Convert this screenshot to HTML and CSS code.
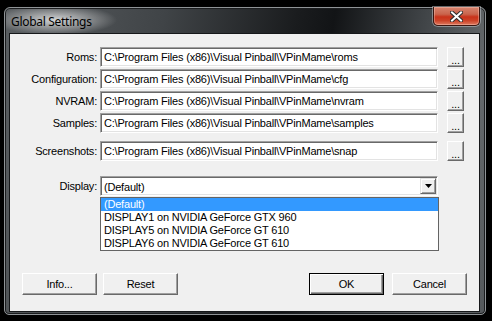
FILE: index.html
```html
<!DOCTYPE html>
<html lang="en">
<head>
  <meta charset="UTF-8" />
  <title>Global Settings</title>
  <link rel="stylesheet" href="styles.css">
</head>
<body>
  <div class="window">
    <div class="titlebar">
      <span class="title">Global Settings</span>
      <div class="close">
        <svg width="13" height="11" viewBox="0 0 13 11">
          <path d="M2 1.5 L11 9.5 M11 1.5 L2 9.5" stroke="#2d2d2d" stroke-width="4" stroke-linecap="square" />
          <path d="M2 1.5 L11 9.5 M11 1.5 L2 9.5" stroke="#fff" stroke-width="2" stroke-linecap="square" />
        </svg>
      </div>
    </div>

    <div class="client">
      <div class="paths">
        <div class="row">
          <label>Roms:</label>
          <div class="edit">C:\Program Files (x86)\Visual Pinball\VPinMame\roms</div>
          <div class="btn browse">...</div>
        </div>
        <div class="row">
          <label>Configuration:</label>
          <div class="edit">C:\Program Files (x86)\Visual Pinball\VPinMame\cfg</div>
          <div class="btn browse">...</div>
        </div>
        <div class="row">
          <label>NVRAM:</label>
          <div class="edit">C:\Program Files (x86)\Visual Pinball\VPinMame\nvram</div>
          <div class="btn browse">...</div>
        </div>
        <div class="row">
          <label>Samples:</label>
          <div class="edit">C:\Program Files (x86)\Visual Pinball\VPinMame\samples</div>
          <div class="btn browse">...</div>
        </div>
        <div class="row spaced">
          <label>Screenshots:</label>
          <div class="edit">C:\Program Files (x86)\Visual Pinball\VPinMame\snap</div>
          <div class="btn browse">...</div>
        </div>
      </div>

      <div class="row display">
        <label>Display:</label>
        <div class="combo">
          <span class="combo-text">(Default)</span>
          <span class="drop">
            <svg width="7" height="4" viewBox="0 0 7 4"><path d="M0 0 H7 L3.5 4 Z" fill="#000" /></svg>
          </span>
          <ul class="list">
            <li class="selected">(Default)</li>
            <li>DISPLAY1 on NVIDIA GeForce GTX 960</li>
            <li>DISPLAY5 on NVIDIA GeForce GT 610</li>
            <li>DISPLAY6 on NVIDIA GeForce GT 610</li>
          </ul>
        </div>
      </div>

      <div class="actions">
        <div class="group">
          <div class="btn push">Info...</div>
          <div class="btn push">Reset</div>
        </div>
        <div class="group wide">
          <div class="btn push default">OK</div>
          <div class="btn push">Cancel</div>
        </div>
      </div>
    </div>
  </div>
</body>
</html>
```

FILE: styles.css
```css
* {
  box-sizing: border-box;
}

body {
  margin: 0;
  padding: 7px 0 0 4px;
  width: 492px;
  height: 321px;
  overflow: hidden;
  background: #000;
  font-family: 'Liberation Sans', Arial, sans-serif;
  font-size: 11px;
  letter-spacing: -0.2px;
  color: #000;
}

.window {
  width: 482px;
  height: 308px;
  border: 1px solid #8f9396;
  border-radius: 6px 6px 5px 5px;
  padding: 0 5px 2px 4px;
  display: flex;
  flex-direction: column;
  background:
    radial-gradient(ellipse 62px 15px at 50px 12px, rgba(255, 255, 255, 0.75), rgba(255, 255, 255, 0)),
    linear-gradient(100deg, #5a5e61 0%, #404447 30%, #1a1c1e 55%, #121416 62%, #3e4245 78%, #64686b 92%, #54585b 100%);
  box-shadow: inset 0 0 0 1px #1b1d1f;
}

.titlebar {
  height: 25px;
  display: flex;
  justify-content: space-between;
  align-items: flex-start;
}

.title {
  font-family: 'Noto Sans', sans-serif;
  font-size: 12px;
  letter-spacing: -0.3px;
  padding: 5px 0 0 2px;
  color: #000;
}

.close {
  width: 47px;
  height: 19px;
  margin-top: -1px;
  border: 1px solid #3b1610;
  border-top: none;
  border-radius: 0 0 5px 5px;
  display: flex;
  align-items: center;
  justify-content: center;
  background: linear-gradient(#d7846f 0%, #c9644c 40%, #c8321a 55%, #cc4227 75%, #de7a5f 100%);
  box-shadow: inset 0 0 0 1px rgba(255, 220, 210, 0.35), 0 0 0 1px rgba(200, 205, 210, 0.5);
}

.client {
  flex: 1;
  background: #f0f0f0;
  border: 1px solid #16181a;
  display: flex;
  flex-direction: column;
}

.paths {
  padding-top: 13px;
}

.row {
  display: flex;
  align-items: center;
  height: 20px;
}

.row + .row {
  margin-top: 2px;
}

.row.spaced {
  margin-top: 8px;
}

label {
  width: 88px;
  text-align: right;
  padding-right: 1px;
}

.edit {
  width: 338px;
  height: 20px;
  margin-left: 2px;
  padding: 3px 0 0 3px;
  background: #fff;
  border-top: 1px solid #a0a0a0;
  border-left: 1px solid #a0a0a0;
  border-right: 1px solid #fff;
  border-bottom: 1px solid #fff;
  box-shadow: inset 1px 1px 0 #696969, inset -1px -1px 0 #e3e3e3;
  white-space: nowrap;
  overflow: hidden;
}

.btn {
  background: #f0f0f0;
  border-top: 1px solid #fff;
  border-left: 1px solid #fff;
  border-right: 1px solid #696969;
  border-bottom: 1px solid #696969;
  box-shadow: inset -1px -1px 0 #a0a0a0;
  text-align: center;
}

.browse {
  width: 17px;
  height: 20px;
  margin-left: 9px;
  line-height: 24px;
}

.display {
  margin-top: 15px;
}

.combo {
  position: relative;
  width: 338px;
  height: 20px;
  margin-left: 2px;
  padding: 0 1px 0 3px;
  display: flex;
  align-items: center;
  justify-content: space-between;
  background: #fff;
  border-top: 1px solid #a0a0a0;
  border-left: 1px solid #a0a0a0;
  border-right: 1px solid #fff;
  border-bottom: 1px solid #fff;
  box-shadow: inset 1px 1px 0 #696969, inset -1px -1px 0 #e3e3e3;
}

.combo-text {
  padding-top: 1px;
}

.drop {
  width: 16px;
  height: 16px;
  display: flex;
  align-items: center;
  justify-content: center;
  background: #f0f0f0;
  border-top: 1px solid #e3e3e3;
  border-left: 1px solid #e3e3e3;
  border-right: 1px solid #696969;
  border-bottom: 1px solid #696969;
  box-shadow: inset 1px 1px 0 #fff, inset -1px -1px 0 #a0a0a0;
}

.list {
  position: absolute;
  top: 20px;
  left: -1px;
  width: 339px;
  margin: 0;
  padding: 0;
  list-style: none;
  background: #fff;
  border: 1px solid #646464;
}

.list li {
  height: 13px;
  line-height: 13px;
  padding-left: 3px;
  white-space: nowrap;
}

.list li.selected {
  background: #3399ff;
  color: #fff;
}

.actions {
  margin-top: auto;
  padding: 0 12px 16px 12px;
  display: flex;
  justify-content: space-between;
}

.group {
  display: flex;
  gap: 6px;
}

.group.wide {
  gap: 8px;
}

.push {
  width: 75px;
  height: 22px;
  line-height: 20px;
}

.push.default {
  border: 1px solid #000;
  box-shadow: inset 1px 1px 0 #fff, inset -1px -1px 0 #696969, inset -2px -2px 0 #a0a0a0;
}
```
